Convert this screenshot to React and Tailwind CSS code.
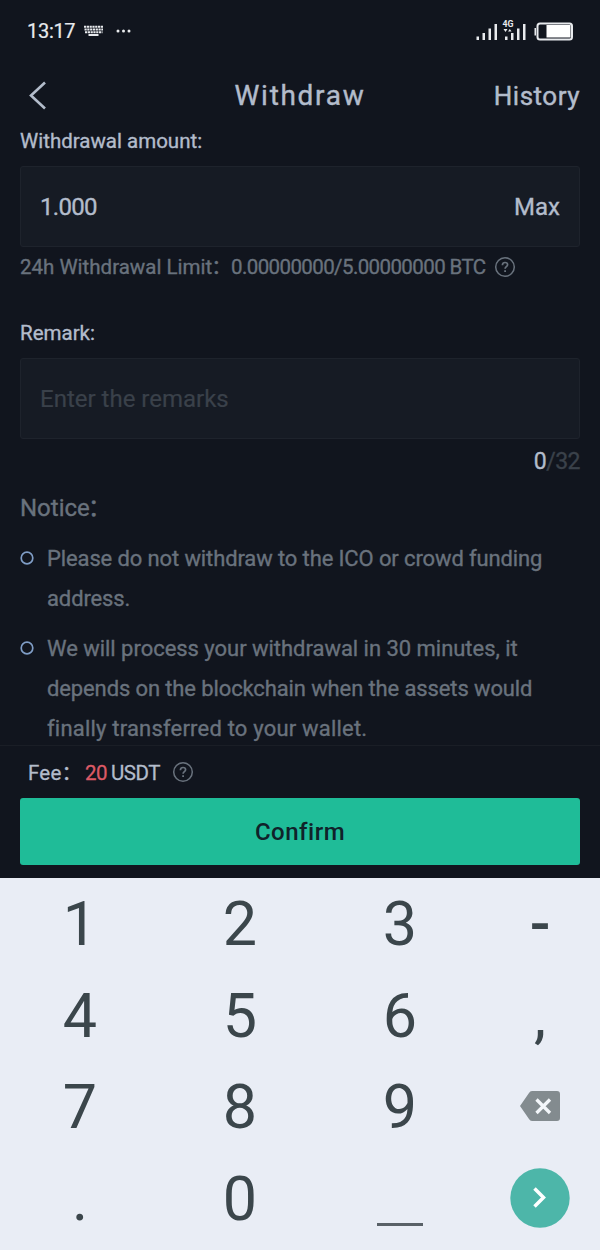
import React from "react";

const Help = () => (
  <svg width="22" height="22" viewBox="0 0 22 22" fill="none" stroke="currentColor" strokeWidth="1.5">
    <circle cx="11" cy="11" r="9.3" />
    <path d="M8.4 9.2c0-1.7 1.1-2.7 2.6-2.7s2.6.9 2.6 2.3c0 1.9-2.5 1.9-2.5 4" strokeWidth="1.7" />
    <path d="M11.1 14.2v1.8" strokeWidth="1.8" />
  </svg>
);

const Bullet = () => (
  <svg className="mt-[12px] shrink-0" width="14" height="14" viewBox="0 0 14 14" fill="none" stroke="#7f9dc6" strokeWidth="1.7">
    <circle cx="7" cy="7" r="5.8" />
  </svg>
);

const StatusBar = () => (
  <div className="flex h-[62px] shrink-0 items-center justify-between pl-[27px] pr-[26px] text-[#e8eaed]">
    <div className="flex items-center">
      <span className="w-[57px] text-[20px] leading-[24px] tracking-[-0.3px] [-webkit-text-stroke:0.2px]">13:17</span>
      <svg width="20" height="12" viewBox="0 0 20 12" fill="none" stroke="currentColor">
        <path d="M0 1.8h19" strokeWidth="2.1" strokeDasharray="2.2 .6" />
        <path d="M.5 4.500h18.500" strokeWidth="2" strokeDasharray="2.2 .6" />
        <path d="M1 7.200h17.500" strokeWidth="2" strokeDasharray="2.2 .6" />
        <path d="M4.500 10h10" strokeWidth="2" />
      </svg>
      <svg className="ml-[12px]" width="16" height="4" viewBox="0 0 16 4" fill="currentColor">
        <circle cx="2" cy="2" r="1.500" />
        <circle cx="7.500" cy="2" r="1.500" />
        <circle cx="13" cy="2" r="1.500" />
      </svg>
    </div>
    <svg width="98" height="24" viewBox="0 0 98 24" fill="currentColor">
      <path d="M.5 17.500h2.500V21H.5zM6.500 14h2.500v7H6.500zM12.500 9.500h2.500V21h-2.500zM18.500 5h2.500v16h-2.500z" />
      <path d="M29 17.500h2.500V21H29zM35 14h2.500v7H35zM41 9.500h2.500V21H41zM47 5h2.500v16H47z" />
      <path d="M27.500 10h4l-2 3zM32 12.500l1.800-2.500 1.800 2.500z" />
      <text x="26.500" y="8" fontSize="9.500" fontWeight="700" fontFamily="Roboto, sans-serif" textLength="11" lengthAdjust="spacingAndGlyphs">4G</text>
      <rect x="61.500" y="4.500" width="34.500" height="16" rx="2.500" fill="none" stroke="currentColor" strokeWidth="2" />
      <rect x="70.500" y="6" width="24" height="12.500" fill="#fff" />
      <path d="M58.500 9h1.500v7.500h-1.500z" />
    </svg>
  </div>
);

const Key = ({ children }) => <div className="flex items-center justify-center">{children}</div>;

export default function App() {
  return (
    <div className="flex h-[1250px] w-[600px] flex-col overflow-hidden bg-[#11151e] font-['Roboto','Noto_Sans_CJK_SC',sans-serif] whitespace-nowrap text-[#b3bccb]">
      <StatusBar />
      <header className="grid h-[67px] shrink-0 grid-cols-[1fr_auto_1fr] items-center px-[20px] [-webkit-text-stroke:0.4px]">
        <svg className="ml-[8px]" width="20" height="30" viewBox="0 0 20 30" fill="none" stroke="currentColor" strokeWidth="2.600">
          <path d="M17 1.500 3 14.500 17 27.500" />
        </svg>
        <h1 className="pt-px text-[28px] leading-[32px] tracking-[1.700px]">Withdraw</h1>
        <span className="text-right text-[26px] leading-[32px] tracking-[0.500px]">History</span>
      </header>
      <main className="flex h-[616px] shrink-0 flex-col overflow-hidden px-[20px] [-webkit-text-stroke:0.35px]">
        <label className="shrink-0 text-[20.500px] leading-[24px]">Withdrawal amount:</label>
        <div className="mt-[13px] flex h-[81px] shrink-0 items-center justify-between rounded-[3px] border border-[#1e232c] bg-[#161b24] px-[19px] text-[24px]">
          <span className="tracking-[-0.700px]">1.000</span>
          <span>Max</span>
        </div>
        <div className="mt-[8px] flex h-[24px] shrink-0 items-center text-[20.500px] leading-[24px] text-[#69727d]">
          <span className="w-[211px]">24h Withdrawal Limit<span className="-ml-px">：</span></span>
          <span className="w-[263px] tracking-[-0.600px]">0.00000000/5.00000000 BTC</span>
          <span className="mb-px"><Help /></span>
        </div>
        <label className="mt-[42px] shrink-0 text-[20.500px] leading-[24px]">Remark:</label>
        <div className="mt-[13px] flex h-[81px] shrink-0 items-center rounded-[3px] border border-[#1e232c] bg-[#161b24] px-[19px] text-[24px] text-[#3a414a] [-webkit-text-stroke:0.2px]">
          Enter the remarks
        </div>
        <div className="mt-[9px] shrink-0 text-right text-[23px] leading-[28px] tracking-[-0.500px] text-[#3a414a]">
          <span className="text-[#b3bccb]">0</span>/32
        </div>
        <h2 className="mt-[17px] shrink-0 text-[24px] leading-[30px] text-[#69727d]">Notice<span className="-ml-[2px]">：</span></h2>
        <ul className="mt-[16px] flex shrink-0 flex-col gap-[10px] text-[22px] leading-[40px] tracking-[-0.120px] text-[#69727d]">
          <li className="flex gap-[13px]">
            <Bullet />
            <p>Please do not withdraw to the ICO or crowd funding<br />address.</p>
          </li>
          <li className="flex gap-[13px]">
            <Bullet />
            <p><span className="tracking-[-0.030px]">We will process your withdrawal in 30 minutes, it</span><br />depends on the blockchain when the assets would<br /><span className="tracking-[0.200px]">finally transferred to your wallet.</span></p>
          </li>
        </ul>
      </main>
      <footer className="flex h-[133px] shrink-0 flex-col border-t border-[#1a1e26] px-[20px]">
        <div className="flex h-[52px] shrink-0 items-center pl-[8px] pt-px text-[20.500px] leading-[24px] tracking-[-0.500px] [-webkit-text-stroke:0.3px]">
          <span className="w-[57px] tracking-[0.200px]">Fee：</span>
          <span className="w-[26px] text-[#dc5a66]">20</span>
          <span className="w-[61px]">USDT</span>
          <span className="mb-px text-[#69727d]"><Help /></span>
        </div>
        <button className="h-[67px] rounded-[3px] bg-[#1fbc98] text-[24px] font-medium tracking-[0.500px] text-[#10222a]">Confirm</button>
      </footer>
      <div className="grid flex-1 grid-cols-[160px_160px_160px_120px] grid-rows-[repeat(4,91.700px)] bg-[#e9edf5] text-[61px] leading-[72px] text-[#3b464b]">
        <Key>1</Key>
        <Key>2</Key>
        <Key>3</Key>
        <Key><span className="font-medium">-</span></Key>
        <Key>4</Key>
        <Key>5</Key>
        <Key>6</Key>
        <Key>,</Key>
        <Key>7</Key>
        <Key>8</Key>
        <Key>9</Key>
        <Key>
          <svg className="mb-[2px]" width="40" height="30" viewBox="0 0 40 30" fill="none">
            <path d="M12 0h25q3 0 3 3v24q0 3-3 3H12q-2 0-3-2L0 15 9 2q1-2 3-2z" fill="#838b8f" />
            <path d="m16.500 8.500 13.500 13.500M30 8.500 16.500 22" stroke="#f3f6fa" strokeWidth="3.300" />
          </svg>
        </Key>
        <Key>.</Key>
        <Key>0</Key>
        <Key><span className="mt-[51px] h-[3px] w-[46px] bg-[#596167]" /></Key>
        <Key>
          <svg className="mb-[2px]" width="60" height="60" viewBox="0 0 60 60" fill="none">
            <circle cx="30" cy="30" r="29.700" fill="#4db6a9" />
            <path d="m24.500 20.500 9 9-9 9" stroke="#fff" strokeWidth="3.500" />
          </svg>
        </Key>
      </div>
    </div>
  );
}
